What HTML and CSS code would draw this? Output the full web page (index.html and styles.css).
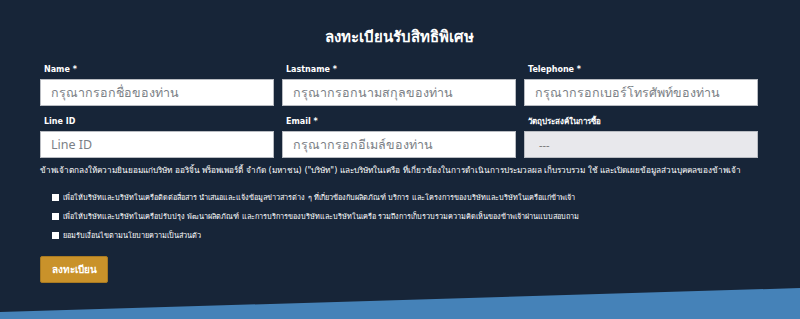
FILE: index.html
```html
<!DOCTYPE html>
<html lang="th">
<head>
<meta charset="utf-8">
<link rel="stylesheet" href="styles.css">
</head>
<body>
<section class="register">
  <h2 class="title">ลงทะเบียนรับสิทธิพิเศษ</h2>
  <form class="form">
    <div class="grid">
      <div class="field">
        <label class="label">Name *</label>
        <input class="input" type="text" placeholder="กรุณากรอกชื่อของท่าน">
      </div>
      <div class="field">
        <label class="label">Lastname *</label>
        <input class="input" type="text" placeholder="กรุณากรอกนามสกุลของท่าน">
      </div>
      <div class="field">
        <label class="label">Telephone *</label>
        <input class="input" type="text" placeholder="กรุณากรอกเบอร์โทรศัพท์ของท่าน">
      </div>
      <div class="field">
        <label class="label">Line ID</label>
        <input class="input" type="text" placeholder="Line ID">
      </div>
      <div class="field">
        <label class="label">Email *</label>
        <input class="input" type="text" placeholder="กรุณากรอกอีเมล์ของท่าน">
      </div>
      <div class="field">
        <label class="label">วัตถุประสงค์ในการซื้อ</label>
        <div class="input select">---</div>
      </div>
    </div>
    <p class="consent">ข้าพเจ้าตกลงให้ความยินยอมแก่บริษัท ออริจิ้น พร็อพเพอร์ตี้ จำกัด (มหาชน) ("บริษัท") และบริษัทในเครือ ที่เกี่ยวข้องในการดำเนินการประมวลผล เก็บรวบรวม ใช้ และเปิดเผยข้อมูลส่วนบุคคลของข้าพเจ้า</p>
    <ul class="checks">
      <li><span class="box"></span>เพื่อให้บริษัทและบริษัทในเครือติดต่อสื่อสาร นำเสนอและแจ้งข้อมูลข่าวสารต่าง ๆ ที่เกี่ยวข้องกับผลิตภัณฑ์ บริการ และโครงการของบริษัทและบริษัทในเครือแก่ข้าพเจ้า</li>
      <li><span class="box"></span>เพื่อให้บริษัทและบริษัทในเครือปรับปรุง พัฒนาผลิตภัณฑ์ และการบริการของบริษัทและบริษัทในเครือ รวมถึงการเก็บรวบรวมความคิดเห็นของข้าพเจ้าผ่านแบบสอบถาม</li>
      <li><span class="box"></span>ยอมรับเงื่อนไขตามนโยบายความเป็นส่วนตัว</li>
    </ul>
    <button class="submit" type="button">ลงทะเบียน</button>
  </form>
  <div class="wave"></div>
</section>
</body>
</html>
```

FILE: styles.css
```css
* { box-sizing: border-box; }
html, body { margin: 0; padding: 0; }
body {
  background: #172538;
  font-family: "DejaVu Sans", "Noto Sans", sans-serif;
  color: #fff;
  overflow: hidden;
}
.register {
  position: relative;
  height: 319px;
  padding: 26px 42px 0 40px;
}
.title {
  margin: 0;
  text-align: center;
  font-size: 15px;
  font-weight: 700;
  line-height: 22px;
}
.form { margin-top: 16px; }
.grid {
  display: grid;
  grid-template-columns: repeat(3, 1fr);
  column-gap: 8px;
  row-gap: 10px;
}
.field { display: flex; flex-direction: column; }
.label {
  font-size: 8px;
  font-weight: 700;
  line-height: 12px;
  margin: 0 0 3px 4px;
}
.input {
  height: 27px;
  border: 1px solid #b9bcc2;
  background: #fff;
  padding: 0 10px;
  font-family: "Noto Sans", sans-serif;
  font-size: 12.5px;
  color: #333;
  outline: none;
}
.input::placeholder { color: #7b7f86; }
.select {
  background: #e8e8ec;
  display: flex;
  align-items: center;
  padding-left: 14px;
  color: #777;
  font-size: 11px;
}
.consent {
  margin: 5px 0 0 0;
  font-size: 8.2px;
  line-height: 14px;
  white-space: nowrap;
}
.checks {
  list-style: none;
  margin: 11px 0 0 12px;
  padding: 0;
}
.checks li {
  display: flex;
  align-items: center;
  font-size: 7.3px;
  line-height: 19px;
  white-space: nowrap;
}
.box {
  width: 7px;
  height: 7px;
  background: #fff;
  margin-right: 4px;
  flex: none;
}
.submit {
  display: block;
  margin-top: 11px;
  width: 68px;
  height: 27px;
  background: #c9922a;
  border: 1px solid #a87a22;
  border-radius: 2px;
  color: #fff;
  font-family: inherit;
  font-size: 10px;
  font-weight: 700;
  padding: 0;
}
.wave {
  position: absolute;
  left: 0;
  right: 0;
  bottom: 0;
  height: 32px;
  background: #4582b8;
  clip-path: polygon(0 25px, 100% 1px, 100% 100%, 0 100%);
}
```
